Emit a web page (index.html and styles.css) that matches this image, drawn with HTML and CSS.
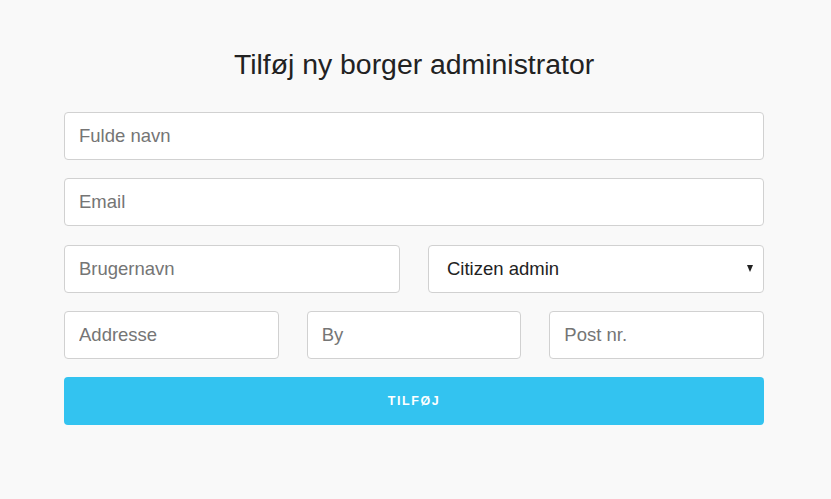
FILE: index.html
```html
<!DOCTYPE html>
<html lang="da">
<head>
<meta charset="utf-8">
<title>Tilføj ny borger administrator</title>
<link rel="stylesheet" href="styles.css">
</head>
<body>
<main class="page">
  <h1 class="title">Tilføj ny borger administrator</h1>
  <form class="form">
    <input class="field" type="text" placeholder="Fulde navn">
    <input class="field" type="email" placeholder="Email">
    <div class="row two">
      <input class="field" type="text" placeholder="Brugernavn">
      <div class="select-wrap">
        <select class="field select">
          <option>Citizen admin</option>
        </select>
      </div>
    </div>
    <div class="row three">
      <input class="field" type="text" placeholder="Addresse">
      <input class="field" type="text" placeholder="By">
      <input class="field" type="text" placeholder="Post nr.">
    </div>
    <button class="submit" type="button">Tilføj</button>
  </form>
</main>
</body>
</html>
```
FILE: styles.css
```css
* { box-sizing: border-box; }
html, body {
  margin: 0;
  padding: 0;
  background: #f9f9f9;
  font-family: "Liberation Sans", Arial, sans-serif;
  color: #222;
}
.page {
  width: 700px;
  margin: 0 0 0 64px;
  padding-top: 44px;
}
.title {
  margin: 0 0 28px;
  text-align: center;
  font-size: 28.4px;
  font-weight: 400;
  line-height: 40px;
  color: #222;
}
.form {
  display: flex;
  flex-direction: column;
  gap: 18.3px;
}
.row {
  display: grid;
  gap: 28px;
}
.row.two { grid-template-columns: 1fr 1fr; }
.row.three { grid-template-columns: 1fr 1fr 1fr; }
.field {
  display: block;
  width: 100%;
  height: 48px;
  margin: 0;
  padding: 0 14px;
  background: #fff;
  border: 1px solid #d1d1d1;
  border-radius: 4px;
  font-family: "Liberation Sans", Arial, sans-serif;
  font-size: 18.5px;
  color: #222;
  outline: none;
}
.field::placeholder { color: #757575; opacity: 1; }
.select-wrap { position: relative; }
.select {
  appearance: none;
  -webkit-appearance: none;
  padding-left: 18px;
}
.select-wrap::after {
  content: "";
  position: absolute;
  right: 11px;
  top: 20px;
  width: 0;
  height: 0;
  border-left: 3.5px solid transparent;
  border-right: 3.5px solid transparent;
  border-top: 7px solid #222;
  pointer-events: none;
}
.submit {
  display: block;
  width: 100%;
  height: 48px;
  margin: 0;
  border: 0;
  border-radius: 4px;
  background: #33c3f0;
  color: #fff;
  font-family: "Liberation Sans", Arial, sans-serif;
  font-size: 12.5px;
  font-weight: 700;
  letter-spacing: 1.6px;
  text-transform: uppercase;
  cursor: pointer;
}
```
